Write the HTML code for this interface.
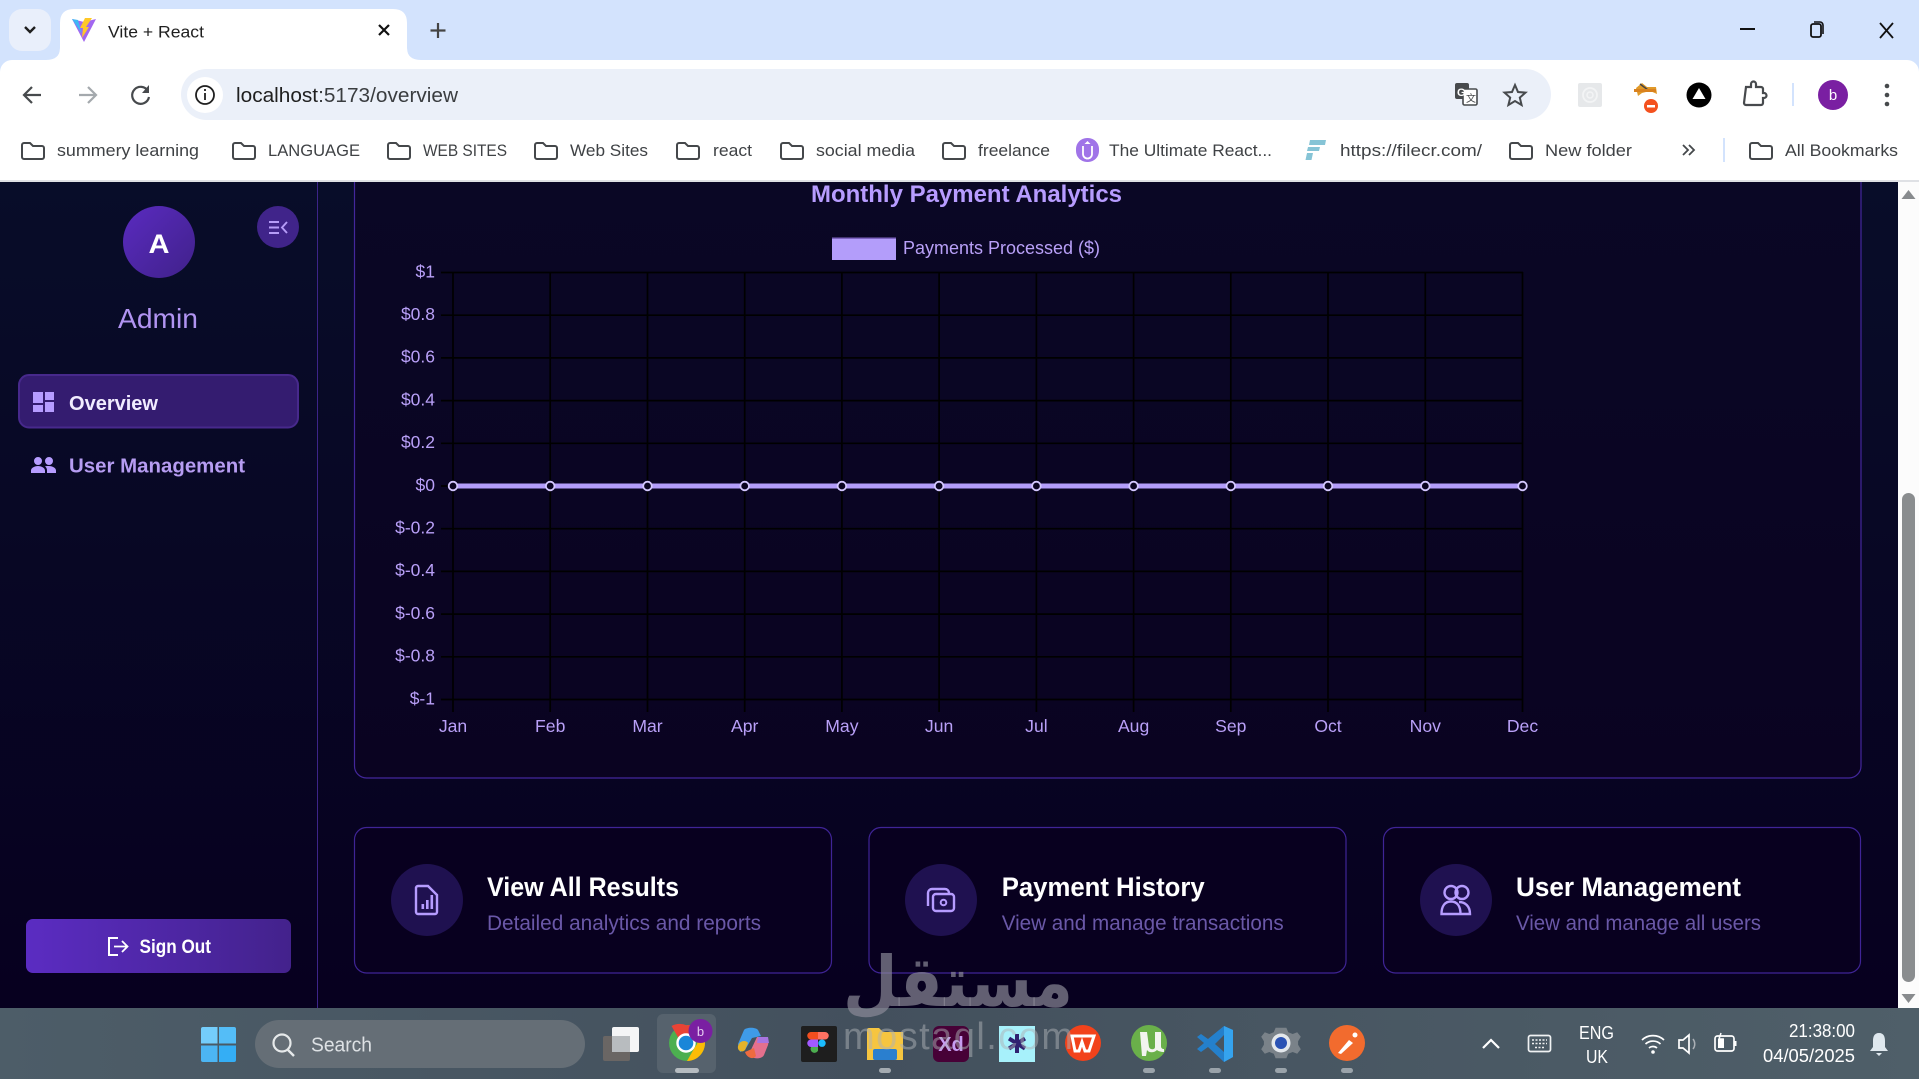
<!DOCTYPE html>
<html lang="en"><head><meta charset="utf-8"><title>Vite + React</title>
<style>
html,body{margin:0;padding:0;width:1919px;height:1079px;overflow:hidden;background:#d3e3fd}
svg{display:block;font-family:"Liberation Sans",Arial,sans-serif}
.bm{font-size:17px;fill:#3f4245}
.yl{font-size:17.5px;fill:#b9a0f8;text-anchor:end}
.xl{font-size:17.6px;fill:#b9a0f8;text-anchor:middle}
.ct{font-size:27px;font-weight:700;fill:#fff}
.cs{font-size:21px;fill:#6a58a8}
.tray{font-size:18px;fill:#fff}
.ind{fill:#9aa3aa}
</style></head><body>
<svg width="1919" height="1079" viewBox="0 0 1919 1079" xmlns="http://www.w3.org/2000/svg">
<defs>
<linearGradient id="pg" x1="0" y1="0" x2="0" y2="1"><stop offset="0" stop-color="#080d29"/><stop offset="1" stop-color="#07001f"/></linearGradient>
<linearGradient id="cd" x1="0" y1="0" x2="0" y2="1"><stop offset="0" stop-color="#0a0725"/><stop offset="1" stop-color="#0a0321"/></linearGradient>
<linearGradient id="av" x1="0" y1="0" x2="1" y2="1"><stop offset="0" stop-color="#5a2bc0"/><stop offset="1" stop-color="#40218a"/></linearGradient>
<linearGradient id="so" x1="0" y1="0" x2="1" y2="0"><stop offset="0" stop-color="#5b2cc2"/><stop offset="1" stop-color="#43228c"/></linearGradient>
<linearGradient id="tb" x1="0" y1="0" x2="1" y2="0"><stop offset="0" stop-color="#4d5d68"/><stop offset=".45" stop-color="#43505d"/><stop offset="1" stop-color="#4f5f69"/></linearGradient>
<symbol id="fd" viewBox="0 0 24 18" width="24" height="18"><path d="M1 3a2 2 0 0 1 2-2h6l3 3h9a2 2 0 0 1 2 2v9a2 2 0 0 1-2 2H3a2 2 0 0 1-2-2z" fill="none" stroke="#45484b" stroke-width="2"/></symbol>
</defs>

<!-- tab strip -->
<rect width="1919" height="80" fill="#d3e3fd"/>
<rect x="9" y="9" width="42" height="42" rx="13" fill="#e9effb"/>
<path d="M25 27l5 5 5-5" fill="none" stroke="#1f1f1f" stroke-width="2.4"/>
<path d="M46 60q14 0 14-12V23q0-14 14-14h319q14 0 14 14v25q0 12 14 12z" fill="#fff"/>
<path d="M72 19l12 3 12-3-12 23z" fill="#a267f0"/>
<path d="M72 19l6 1 4 14z" fill="#3fb6f4"/>
<path d="M85 18l7 0-6 9 3 0-7 11 1-10-3 0z" fill="#ffc828"/>
<text x="108" y="37.5" font-size="17" fill="#1f1f1f" textLength="96" lengthAdjust="spacingAndGlyphs">Vite + React</text>
<path d="M379 25l10 10M389 25l-10 10" stroke="#111" stroke-width="2.2"/>
<path d="M438 23v15M430.500 30.500h15" stroke="#444" stroke-width="2.2"/>
<path d="M1740 29h15" stroke="#111" stroke-width="2"/>
<rect x="1811" y="24" width="10" height="13" rx="2" fill="none" stroke="#111" stroke-width="1.800"/>
<path d="M1814 22h6a3 3 0 0 1 3 3v9" fill="none" stroke="#111" stroke-width="1.600"/>
<path d="M1880 23l13 15M1893 23l-13 15" stroke="#111" stroke-width="1.800"/>

<!-- toolbar -->
<path d="M0 72a12 12 0 0 1 12-12H1907a12 12 0 0 1 12 12V180H0z" fill="#fff"/>
<path d="M46 60q14 0 14-12h347q0 12 14 12z" fill="#fff"/>
<rect y="180" width="1919" height="2" fill="#dfe1e5"/>
<path d="M41 95H25M32 87l-8 8 8 8" fill="none" stroke="#474a4d" stroke-width="2.200"/>
<path d="M79 95h16M88 87l8 8-8 8" fill="none" stroke="#a4a9ad" stroke-width="2.200"/>
<path d="M148 91a8.500 8.500 0 1 0 1 6" fill="none" stroke="#474a4d" stroke-width="2.200"/><path d="M149 85v8h-7" fill="#474a4d"/>
<rect x="181" y="69" width="1370" height="51" rx="25.500" fill="#ebf0f9"/>
<circle cx="205" cy="95" r="18" fill="#fff"/>
<circle cx="205" cy="95" r="9" fill="none" stroke="#1f1f1f" stroke-width="1.800"/><path d="M205 93v7M205 89v2" stroke="#1f1f1f" stroke-width="1.800"/>
<text x="236" y="102" font-size="20" fill="#3a3d40" textLength="222" lengthAdjust="spacingAndGlyphs"><tspan fill="#1f1f1f">localhost</tspan>:5173/overview</text>
<rect x="1455" y="83" width="14" height="16" rx="2" fill="#474a4d"/><rect x="1463" y="89" width="14" height="16" rx="1.500" fill="#fff" stroke="#474a4d" stroke-width="1.600"/>
<text x="1457" y="96" font-size="11" font-weight="700" fill="#fff">G</text><text x="1466" y="102" font-size="10" fill="#474a4d">文</text>
<path d="M1515 85l3 7 7.500.6-5.700 5 1.800 7.400-6.600-4-6.600 4 1.800-7.400-5.700-5 7.500-.6z" fill="none" stroke="#474a4d" stroke-width="2"/>
<rect x="1578" y="83" width="24" height="24" rx="2" fill="#e6e8ea"/><circle cx="1590" cy="95" r="7" fill="none" stroke="#f3f4f5" stroke-width="1.800"/><circle cx="1590" cy="95" r="3" fill="none" stroke="#f3f4f5" stroke-width="1.500"/>
<path d="M1636 88l6-5 5 4 9 0 1 7-7-3-8 2-4 3z" fill="#e09a2a"/><path d="M1640 84l8 6" stroke="#444" stroke-width="1.500"/><rect x="1634" y="89" width="22" height="3" fill="#d9821f"/>
<circle cx="1651" cy="106" r="7" fill="#f4511e"/><rect x="1647" y="105" width="8" height="2.500" fill="#fff"/>
<circle cx="1699" cy="95" r="12.500" fill="#000"/><path d="M1699 88l6.500 11h-13z" fill="#fff"/>
<path d="M1746 87h5v-3a2.500 2.500 0 0 1 5 0v3h5a2 2 0 0 1 2 2v4h1a2.500 2.500 0 0 1 0 5h-1v5a2 2 0 0 1-2 2h-15a2 2 0 0 1-2-2z" fill="none" stroke="#474a4d" stroke-width="2.200"/>
<rect x="1792" y="83" width="2" height="23" fill="#d3e3fd"/>
<circle cx="1833" cy="95" r="15" fill="#7a1fa2"/><text x="1833" y="100" font-size="15" fill="#fff" text-anchor="middle">b</text>
<circle cx="1887" cy="86" r="2.300" fill="#474a4d"/><circle cx="1887" cy="95" r="2.300" fill="#474a4d"/><circle cx="1887" cy="104" r="2.300" fill="#474a4d"/>

<!-- bookmarks -->
<use href="#fd" x="21" y="142"/><text class="bm" x="57" y="156" textLength="142" lengthAdjust="spacingAndGlyphs">summery learning</text>
<use href="#fd" x="232" y="142"/><text class="bm" x="268" y="156" textLength="92" lengthAdjust="spacingAndGlyphs">LANGUAGE</text>
<use href="#fd" x="387" y="142"/><text class="bm" x="423" y="156" textLength="84" lengthAdjust="spacingAndGlyphs">WEB SITES</text>
<use href="#fd" x="534" y="142"/><text class="bm" x="570" y="156" textLength="78" lengthAdjust="spacingAndGlyphs">Web Sites</text>
<use href="#fd" x="676" y="142"/><text class="bm" x="713" y="156" textLength="39" lengthAdjust="spacingAndGlyphs">react</text>
<use href="#fd" x="780" y="142"/><text class="bm" x="816" y="156" textLength="99" lengthAdjust="spacingAndGlyphs">social media</text>
<use href="#fd" x="942" y="142"/><text class="bm" x="978" y="156" textLength="72" lengthAdjust="spacingAndGlyphs">freelance</text>
<rect x="1076" y="138" width="23" height="24" rx="11" fill="#a074e8"/><path d="M1083 146v8a4.500 4.500 0 0 0 9 0v-8" fill="none" stroke="#fff" stroke-width="1.800"/><path d="M1087.500 141l-3 3h6z" fill="#fff"/>
<text class="bm" x="1109" y="156" textLength="163" lengthAdjust="spacingAndGlyphs">The Ultimate React...</text>
<path d="M1310 140h16l-1 5h-16zM1308 147h12l-1 4h-12zM1307 153h6l-1.500 7h-6z" fill="#86c4d6"/>
<text class="bm" x="1340" y="156" textLength="142" lengthAdjust="spacingAndGlyphs">https://filecr.com/</text>
<use href="#fd" x="1509" y="142"/><text class="bm" x="1545" y="156" textLength="87" lengthAdjust="spacingAndGlyphs">New folder</text>
<path d="M1683 145l5 5-5 5M1689 145l5 5-5 5" fill="none" stroke="#45484b" stroke-width="1.800"/>
<rect x="1723" y="138" width="2" height="24" fill="#d3e3fd"/>
<use href="#fd" x="1749" y="142"/><text class="bm" x="1785" y="156" textLength="113" lengthAdjust="spacingAndGlyphs">All Bookmarks</text>

<!-- page -->
<rect y="182" width="1898" height="826" fill="url(#pg)"/>
<rect x="317" y="182" width="1" height="826" fill="#3c2488"/>

<!-- sidebar -->
<circle cx="159" cy="242" r="36" fill="url(#av)"/>
<text x="148.500" y="253" font-size="27" font-weight="700" fill="#fff" textLength="21" lengthAdjust="spacingAndGlyphs">A</text>
<circle cx="278" cy="227" r="21" fill="#40248a"/>
<path d="M269 222h10M269 227.500h10M269 233h10M287 222l-5 5.500 5 5.500" fill="none" stroke="#b69cf8" stroke-width="1.900"/>
<text x="118" y="328" font-size="28" fill="#b194f2" textLength="80" lengthAdjust="spacingAndGlyphs">Admin</text>
<rect x="19" y="375" width="279" height="52.500" rx="10" fill="#341c70" stroke="#47298c" stroke-width="2"/>
<path d="M33 392h10v11H33zM33 405h10v7H33zM45 392h9v8h-9zM45 402h9v10h-9z" fill="#b69cff"/>
<text x="69" y="410" font-size="20" font-weight="700" fill="#f1ecff" textLength="89" lengthAdjust="spacingAndGlyphs">Overview</text>
<path d="M38 457a4 4 0 1 1 0 8 4 4 0 0 1 0-8zM49 457a4 4 0 1 1 0 8 4 4 0 0 1 0-8zM31 473v-2.500c0-3 4.500-4.500 7-4.500s7 1.500 7 4.500v2.500zM47 473v-2.500c0-1.800-.8-3.200-2-4.200 1.500-.3 3-.3 4-.3 2.500 0 7 1.500 7 4.500v2.500z" fill="#b69cff"/>
<text x="69" y="472.500" font-size="20" font-weight="700" fill="#b69cf2" textLength="176" lengthAdjust="spacingAndGlyphs">User Management</text>
<rect x="26" y="919" width="265" height="54" rx="7" fill="url(#so)"/>
<path d="M118 938h-9v17h9" fill="none" stroke="#fff" stroke-width="2"/><path d="M114 946.500h13M122 941l5.500 5.500-5.500 5.500" fill="none" stroke="#fff" stroke-width="1.800"/>
<text x="139.500" y="953" font-size="19" font-weight="700" fill="#fff" textLength="71.500" lengthAdjust="spacingAndGlyphs">Sign Out</text>

<!-- chart card -->
<path d="M354.500 182V766a12 12 0 0 0 12 12H1849a12 12 0 0 0 12-12V182" fill="url(#cd)" stroke="#43279c" stroke-width="1.200"/>
<text x="966.500" y="202" font-size="24" font-weight="700" fill="#b79cff" text-anchor="middle" textLength="311" lengthAdjust="spacingAndGlyphs">Monthly Payment Analytics</text>
<rect x="832" y="238" width="64" height="22" fill="#b39dfa"/>
<rect x="832" y="237.500" width="64" height="1.500" fill="#7d63c0"/>
<text x="903" y="254" font-size="18" fill="#b9a0f8" textLength="197" lengthAdjust="spacingAndGlyphs">Payments Processed ($)</text>

<g stroke="#000" stroke-width="1.700">
<path d="M441 272.500H1523M441 315.200H1523M441 357.900H1523M441 400.600H1523M441 443.300H1523M441 486H1523M441 528.700H1523M441 571.400H1523M441 614.100H1523M441 656.800H1523M441 699.500H1523"/>
<path d="M453 272V712M550.200 272V712M647.500 272V712M744.700 272V712M841.900 272V712M939.100 272V712M1036.400 272V712M1133.600 272V712M1230.800 272V712M1328 272V712M1425.300 272V712M1522.500 272V712"/>
</g>
<text class="yl" x="435" y="277.500">$1</text><text class="yl" x="435" y="320">$0.8</text><text class="yl" x="435" y="362.700">$0.6</text><text class="yl" x="435" y="405.400">$0.4</text><text class="yl" x="435" y="448.100">$0.2</text><text class="yl" x="435" y="490.800">$0</text><text class="yl" x="435" y="533.500">$-0.2</text><text class="yl" x="435" y="576.200">$-0.4</text><text class="yl" x="435" y="618.900">$-0.6</text><text class="yl" x="435" y="661.600">$-0.8</text><text class="yl" x="435" y="704.300">$-1</text>
<text class="xl" x="453" y="732">Jan</text><text class="xl" x="550.200" y="732">Feb</text><text class="xl" x="647.500" y="732">Mar</text><text class="xl" x="744.700" y="732">Apr</text><text class="xl" x="841.900" y="732">May</text><text class="xl" x="939.100" y="732">Jun</text><text class="xl" x="1036.400" y="732">Jul</text><text class="xl" x="1133.600" y="732">Aug</text><text class="xl" x="1230.800" y="732">Sep</text><text class="xl" x="1328" y="732">Oct</text><text class="xl" x="1425.300" y="732">Nov</text><text class="xl" x="1522.500" y="732">Dec</text>
<rect x="453" y="483.500" width="1070" height="5" fill="#b39dfa"/>
<g fill="#0a0420" stroke="#d4c8ff" stroke-width="1.800">
<circle cx="453" cy="486" r="4.300"/><circle cx="550.200" cy="486" r="4.300"/><circle cx="647.500" cy="486" r="4.300"/><circle cx="744.700" cy="486" r="4.300"/><circle cx="841.900" cy="486" r="4.300"/><circle cx="939.100" cy="486" r="4.300"/><circle cx="1036.400" cy="486" r="4.300"/><circle cx="1133.600" cy="486" r="4.300"/><circle cx="1230.800" cy="486" r="4.300"/><circle cx="1328" cy="486" r="4.300"/><circle cx="1425.300" cy="486" r="4.300"/><circle cx="1522.500" cy="486" r="4.300"/>
</g>

<!-- action cards -->
<rect x="354.500" y="827.500" width="477" height="145.500" rx="12" fill="#08001f" stroke="#3f2496" stroke-width="1.200"/>
<circle cx="427" cy="900" r="36" fill="#1f1150"/>
<path d="M418 886h10l9 9v17a2 2 0 0 1-2 2h-17a2 2 0 0 1-2-2v-24a2 2 0 0 1 2-2z" fill="none" stroke="#b69cff" stroke-width="2.400"/>
<path d="M421.500 904h2.600v5h-2.600zM426 900h2.600v9H426zM430.500 895h2.600v14h-2.600z" fill="#b69cff"/>
<text class="ct" x="487" y="896" textLength="192" lengthAdjust="spacingAndGlyphs">View All Results</text>
<text class="cs" x="487" y="930" textLength="274" lengthAdjust="spacingAndGlyphs">Detailed analytics and reports</text>

<rect x="869" y="827.500" width="477" height="145.500" rx="12" fill="#08001f" stroke="#3f2496" stroke-width="1.200"/>
<circle cx="941" cy="900" r="36" fill="#1f1150"/>
<path d="M928 906v-13a4 4 0 0 1 4-4h13a4 4 0 0 1 4 4" fill="none" stroke="#b69cff" stroke-width="2.400"/>
<rect x="933" y="894" width="21" height="17" rx="3" fill="#1f1150" stroke="#b69cff" stroke-width="2.400"/><circle cx="943.500" cy="902.500" r="2.800" fill="none" stroke="#b69cff" stroke-width="2"/>
<text class="ct" x="1001.700" y="896" textLength="203" lengthAdjust="spacingAndGlyphs">Payment History</text>
<text class="cs" x="1001.700" y="930" textLength="282" lengthAdjust="spacingAndGlyphs">View and manage transactions</text>

<rect x="1383.500" y="827.500" width="477" height="145.500" rx="12" fill="#08001f" stroke="#3f2496" stroke-width="1.200"/>
<circle cx="1456" cy="900" r="36" fill="#1f1150"/>
<circle cx="1451" cy="892.500" r="6.500" fill="none" stroke="#b69cff" stroke-width="2.400"/><circle cx="1462" cy="892.500" r="6.500" fill="none" stroke="#b69cff" stroke-width="2.400"/>
<path d="M1441.500 914c0-8 3.500-12.500 9.500-12.500s9.500 4.500 9.500 12.500zM1459 902c6 0 11 4 11 12h-10" fill="none" stroke="#b69cff" stroke-width="2.400"/>
<text class="ct" x="1516" y="896" textLength="225" lengthAdjust="spacingAndGlyphs">User Management</text>
<text class="cs" x="1516" y="930" textLength="245" lengthAdjust="spacingAndGlyphs">View and manage all users</text>

<!-- scrollbar -->
<rect x="1898" y="182" width="21" height="826" fill="#fcfcfc"/>
<path d="M1901.500 199l7-9 7 9z" fill="#888b8e"/>
<rect x="1902" y="493" width="13" height="489" rx="6.500" fill="#8a8d8f"/>
<path d="M1901.500 994l7 9 7-9z" fill="#888b8e"/>

<!-- taskbar -->
<rect y="1008" width="1919" height="71" fill="url(#tb)"/>
<path d="M201 1029a2 2 0 0 1 2-2h14.500v16.500H201z" fill="#74cdfb"/><path d="M219 1027h15a2 2 0 0 1 2 2v14.500h-17z" fill="#54bdf7"/><path d="M201 1045.500h16.500V1062H203a2 2 0 0 1-2-2z" fill="#4cb5f3"/><path d="M219 1045.500h17V1060a2 2 0 0 1-2 2h-15z" fill="#34aef5"/>
<rect x="255" y="1020" width="330" height="48" rx="24" fill="#656e76"/>
<circle cx="282" cy="1043" r="8.500" fill="none" stroke="#e6e9ea" stroke-width="2.200"/><path d="M288 1050l6 6" stroke="#e6e9ea" stroke-width="2.400"/>
<text x="311" y="1051.700" font-size="20" fill="#dde1e4" textLength="61" lengthAdjust="spacingAndGlyphs">Search</text>
<!-- task view -->
<rect x="603" y="1036" width="27" height="25" rx="2" fill="#6a6664"/><rect x="612" y="1027" width="27" height="25" rx="2" fill="#f4f5f6"/><rect x="612" y="1036" width="18" height="16" fill="#b8bcbf"/>
<!-- chrome -->
<rect x="657" y="1014" width="59" height="59" rx="6" fill="#56626d"/>
<rect x="675" y="1068" width="24" height="5" rx="2.500" fill="#b5bbc0"/>
<circle cx="687" cy="1043" r="18" fill="#4caf50"/><path d="M687 1025a18 18 0 0 1 15.600 9H687a9 9 0 0 0-8 5l-7.500-13a18 18 0 0 1 15.500-.500z" fill="#ea4335"/><path d="M702.600 1034a18 18 0 0 1-15.600 27l8-14a9 9 0 0 0 0-13z" fill="#fbbc05"/>
<circle cx="686" cy="1043" r="8.500" fill="#1a86d8" stroke="#fff" stroke-width="2.400"/>
<circle cx="700.500" cy="1031" r="12" fill="#7a1fa2"/><text x="700.500" y="1036" font-size="13" fill="#e4c9f0" text-anchor="middle">b</text>
<!-- copilot -->
<path d="M738 1044l6-14c2-3 12-3 14 0l3 6-9 2-7 12-5 2z" fill="#3f9be8"/><path d="M738 1046c2-6 8-6 10-3l-3 7c-3 3-8 1-7-4z" fill="#e4b32a"/><path d="M757 1037h7c4 0 5 4 4 8l-4 10c-2 4-9 4-12 2l-3-3z" fill="#e4708d"/><path d="M758 1037l10 0 1 6-12 0z" fill="#a874e0"/><path d="M745 1052l9-4 2 8c-3 4-9 2-11-4z" fill="#ee6b3f"/>
<!-- figma -->
<rect x="801" y="1026" width="36" height="36" rx="2" fill="#1e1e1e"/>
<path d="M811 1032h7v7.500h-7a3.700 3.700 0 0 1 0-7.500z" fill="#f24e1e"/><path d="M818 1032h7a3.700 3.700 0 0 1 0 7.500h-7z" fill="#ff7262"/><path d="M811 1039.500h7v7.500h-7a3.700 3.700 0 0 1 0-7.500z" fill="#a259ff"/><circle cx="822" cy="1043.200" r="3.700" fill="#1abcfe"/><path d="M811 1047h7v3.700a3.700 3.700 0 1 1-7-3.700z" fill="#4cad4f"/>
<!-- folder -->
<path d="M867 1030a2 2 0 0 1 2-2h10l4 4h20v28h-36z" fill="#f6c540"/><rect x="873" y="1049" width="24" height="11" rx="2" fill="#2a7fcf"/>
<rect x="879" y="1068" width="12" height="5" rx="2.500" fill="#a4abb1"/>
<!-- xd -->
<rect x="933" y="1026" width="36" height="36" rx="6" fill="#470137"/>
<text x="951" y="1051" font-size="20" font-weight="700" fill="#c79cf2" text-anchor="middle">Xd</text>
<!-- asterisk -->
<rect x="999" y="1026" width="36" height="36" fill="#a7f1fb"/>
<path d="M1017 1034v19M1009 1038.500l16 10M1025 1038.500l-16 10" stroke="#2f2170" stroke-width="4"/>
<!-- wps -->
<circle cx="1083" cy="1043" r="18" fill="#f2421b"/><path d="M1072 1036h22l-5 15h-4l-3-9-3 9h-4z" fill="none" stroke="#fff" stroke-width="3"/>
<!-- utorrent -->
<circle cx="1149" cy="1043" r="18" fill="#6ab04a"/><path d="M1140 1032h7l2 15c1 3 6 3 6 0v-15h6v14c0 2 1 3 3 3v3c-3 0-6-1-7-2-3 3-8 3-10 0l-1 6h-4z" fill="#f2f4ef"/>
<rect x="1143" y="1068" width="12" height="5" rx="2.500" class="ind"/>
<!-- vscode -->
<path d="M1224 1026l9 4v27l-9 5-16-15-7 5-4-3 7-6-7-6 4-3 7 5zM1224 1035l-9 9 9 8z" fill="#2480cc"/><path d="M1224 1026l9 4v27l-9 5z" fill="#35a3ee"/>
<rect x="1209" y="1068" width="12" height="5" rx="2.500" class="ind"/>
<!-- gear -->
<g transform="translate(1281 1043) scale(.9) translate(-1281 -1043)"><path d="M1275 1026h12l2 5 5 2 5-2 4 5-3 5v4l3 5-4 5-5-2-5 2-2 5h-12l-2-5-5-2-5 2-4-5 3-5v-4l-3-5 4-5 5 2 5-2z" fill="#7a8289"/></g><circle cx="1281" cy="1043" r="9.500" fill="#e4e8ec"/><circle cx="1281" cy="1043" r="6" fill="#2a52b4"/>
<rect x="1275" y="1068" width="12" height="5" rx="2.500" class="ind"/>
<!-- postman -->
<circle cx="1347" cy="1043" r="18" fill="#f26b2e"/><path d="M1338 1053l11-13 4 3-12 11z" fill="#fff"/><circle cx="1355" cy="1035" r="2.500" fill="#fff"/>
<rect x="1341" y="1068" width="12" height="5" rx="2.500" class="ind"/>

<!-- tray -->
<path d="M1483 1048l8-8 8 8" fill="none" stroke="#fff" stroke-width="2.200"/>
<rect x="1528.500" y="1035.500" width="22" height="16" rx="2" fill="none" stroke="#f0f2f3" stroke-width="1.700"/><path d="M1532 1040h15M1532 1043.500h15M1535 1047.500h9" stroke="#f0f2f3" stroke-width="1.500" stroke-dasharray="2 1.500"/>
<text class="tray" x="1579" y="1039" textLength="35" lengthAdjust="spacingAndGlyphs">ENG</text>
<text class="tray" x="1586" y="1063" textLength="22" lengthAdjust="spacingAndGlyphs">UK</text>
<path d="M1642 1040a16 16 0 0 1 22 0M1645.500 1044a11 11 0 0 1 15 0M1649 1048a6 6 0 0 1 8 0" fill="none" stroke="#fff" stroke-width="1.700"/><circle cx="1653" cy="1052" r="1.800" fill="#fff"/>
<path d="M1679 1040h4l6-5v18l-6-5h-4z" fill="none" stroke="#fff" stroke-width="1.700"/><path d="M1693 1039a8 8 0 0 1 0 10" fill="none" stroke="#aab0b5" stroke-width="1.500"/>
<rect x="1715" y="1036" width="19" height="15" rx="2.500" fill="none" stroke="#fff" stroke-width="1.700"/><rect x="1734" y="1041" width="2.500" height="5" fill="#fff"/><rect x="1718" y="1039" width="6" height="9" fill="#fff"/><path d="M1721 1033l-2 6h4l-2 6" fill="none" stroke="#fff" stroke-width="1.500"/>
<text class="tray" x="1789" y="1037" textLength="66" lengthAdjust="spacingAndGlyphs">21:38:00</text>
<text class="tray" x="1763" y="1062" textLength="92" lengthAdjust="spacingAndGlyphs">04/05/2025</text>
<path d="M1879 1033c5 0 6 4 6 8v6l3 4h-18l3-4v-6c0-4 1-8 6-8zM1876 1053h6l-3 3z" fill="#dfe8ee"/>

<!-- watermark -->
<text x="958" y="1006" direction="rtl" text-anchor="middle" font-family="DejaVu Sans, sans-serif" font-size="70" font-weight="700" fill="#8e8c9a" fill-opacity=".68" textLength="230" lengthAdjust="spacingAndGlyphs">مستقل</text>
<text x="843" y="1049" font-size="38" fill="#aeb2b6" fill-opacity=".5" textLength="230" lengthAdjust="spacing">mostaql.com</text>
</svg>
</body></html>
